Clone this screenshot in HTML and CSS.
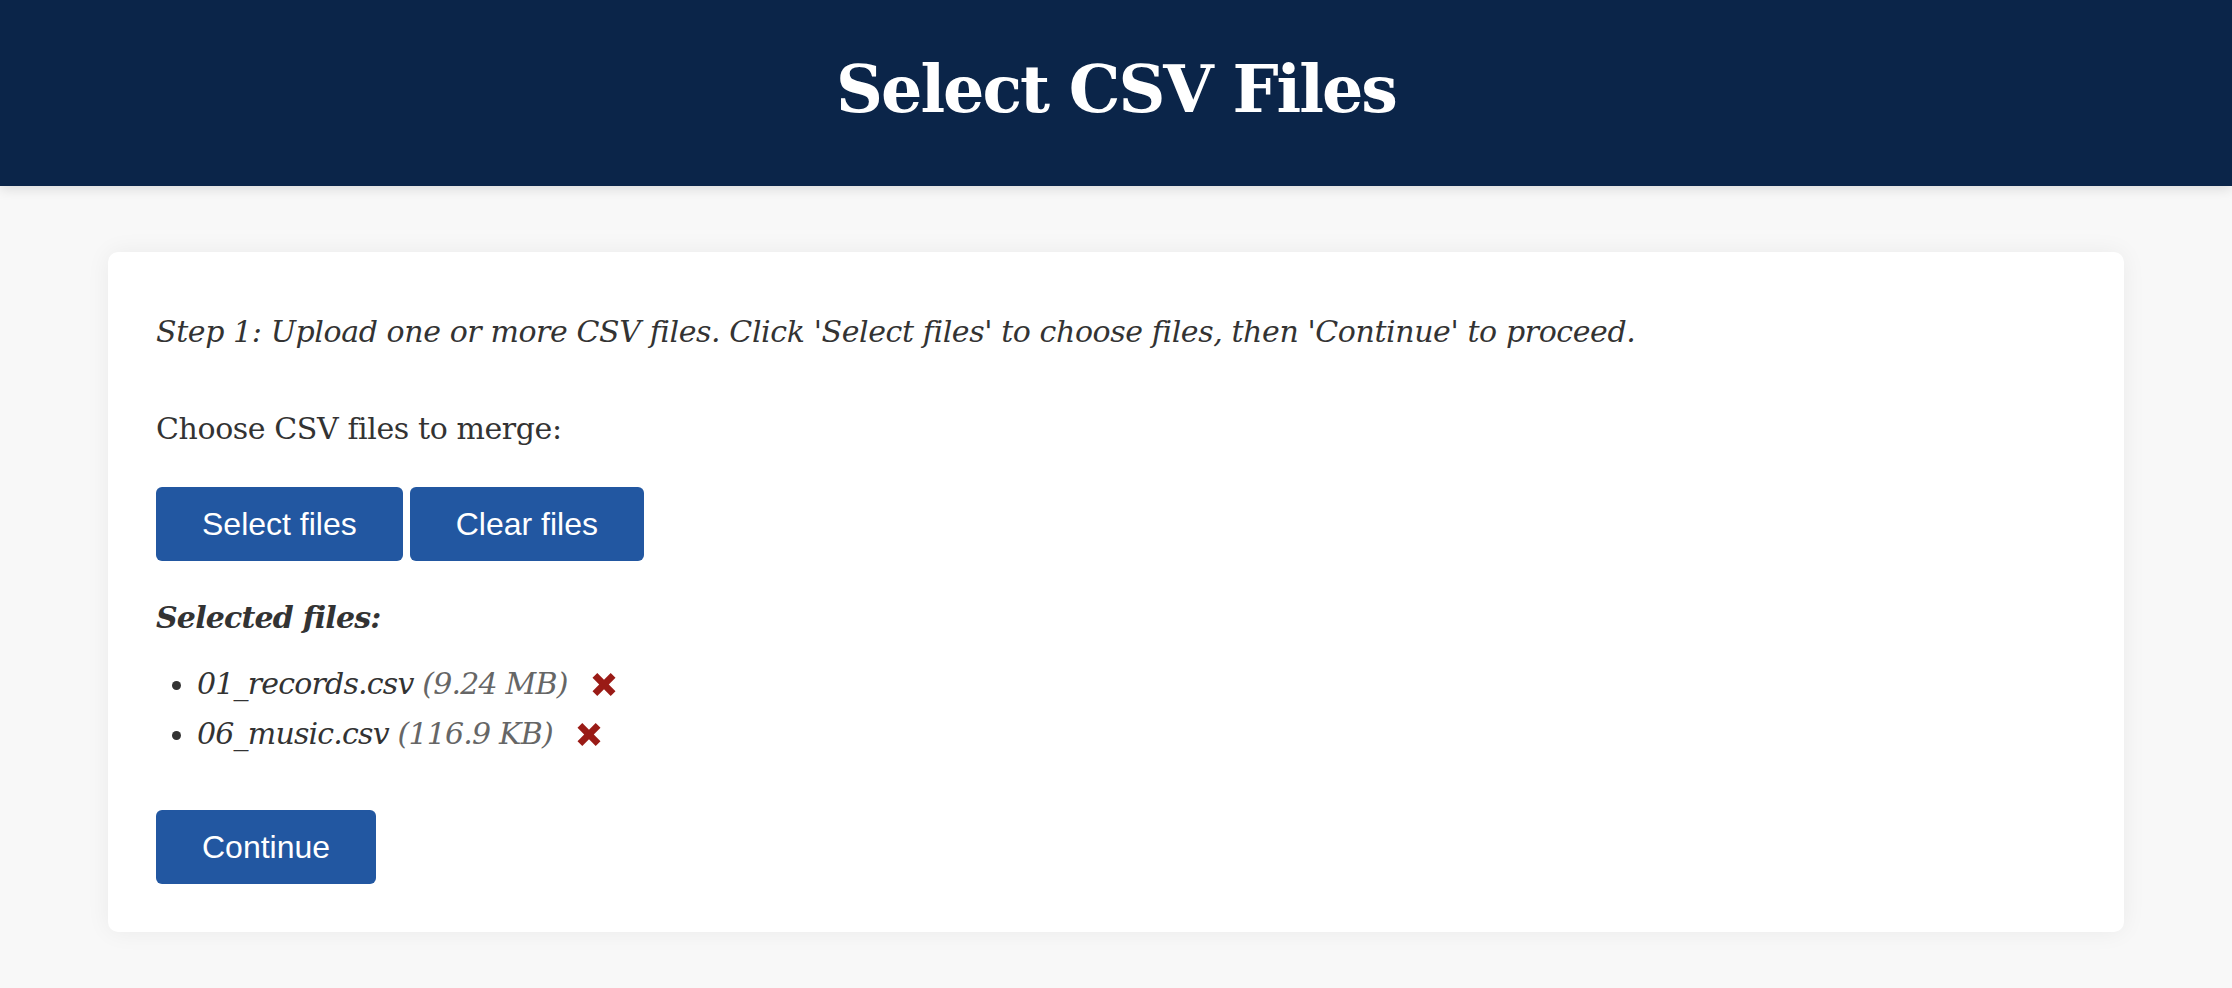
FILE: index.html
```html
<!DOCTYPE html>
<html lang="en">
<head>
<meta charset="utf-8">
<title>Select CSV Files</title>
<link rel="stylesheet" href="styles.css">
</head>
<body>
<header class="site-header">
  <h1 class="title">Select CSV Files</h1>
</header>
<main class="main">
  <section class="card">
    <p class="step">Step 1: Upload one or more CSV files. Click 'Select files' to choose files, then 'Continue' to proceed.</p>
    <p class="label">Choose CSV files to merge:</p>
    <div class="btn-row">
      <button class="btn" type="button">Select files</button>
      <button class="btn" type="button">Clear files</button>
    </div>
    <p class="selected-title">Selected files:</p>
    <ul class="file-list">
      <li class="file"><span class="name">01_records.csv</span> <span class="size">(9.24 MB)</span><span class="remove"><svg viewBox="0 0 24 24" width="24" height="23"><path d="M5 0 L12 7 L19 0 L24 5 L17 12 L24 19 L19 24 L12 17 L5 24 L0 19 L7 12 L0 5 Z" fill="#9a1b16"/></svg></span></li>
      <li class="file"><span class="name">06_music.csv</span> <span class="size">(116.9 KB)</span><span class="remove"><svg viewBox="0 0 24 24" width="24" height="23"><path d="M5 0 L12 7 L19 0 L24 5 L17 12 L24 19 L19 24 L12 17 L5 24 L0 19 L7 12 L0 5 Z" fill="#9a1b16"/></svg></span></li>
    </ul>
    <button class="btn" type="button">Continue</button>
  </section>
</main>
</body>
</html>
```

FILE: styles.css
```css
html, body {
  margin: 0;
  padding: 0;
}
body {
  background: #f8f8f8;
  font-family: "DejaVu Serif", "Liberation Serif", serif;
  color: #333333;
}
.site-header {
  height: 186px;
  background: #0b2549;
  display: flex;
  align-items: center;
  justify-content: center;
  box-shadow: 0 3px 12px rgba(0, 0, 0, 0.12);
}
.title {
  margin: 0 0 8px;
  color: #ffffff;
  font-size: 65px;
  font-weight: bold;
  letter-spacing: -2px;
}
.main {
  padding: 66px 108px 56px;
}
.card {
  background: #ffffff;
  border-radius: 10px;
  padding: 56px 48px 48px;
  box-shadow: 0 0 24px rgba(0, 0, 0, 0.06);
}
.step {
  margin: 0;
  font-style: italic;
  font-size: 30px;
  line-height: 48px;
  letter-spacing: -0.4px;
}
.label {
  margin: 49px 0 0;
  font-size: 30px;
  line-height: 48px;
  letter-spacing: -0.4px;
}
.btn-row {
  display: flex;
  gap: 7px;
  margin-top: 34px;
}
.btn {
  font-family: "Liberation Sans", Arial, sans-serif;
  font-size: 32px;
  height: 74px;
  padding: 0 46px;
  border: none;
  border-radius: 6px;
  background: #2257a1;
  color: #ffffff;
}
.selected-title {
  margin: 33px 0 0;
  font-size: 30px;
  font-weight: bold;
  font-style: italic;
  line-height: 48px;
  letter-spacing: -0.8px;
}
.file-list {
  margin: 17px 0 51px;
  padding-left: 41px;
  list-style: disc;
}
.file {
  font-size: 30px;
  line-height: 50px;
  font-style: italic;
  letter-spacing: -0.8px;
}
.size {
  color: #666666;
}
.remove {
  display: inline-block;
  margin-left: 24px;
  vertical-align: -2px;
}
.remove svg {
  display: block;
}
```
